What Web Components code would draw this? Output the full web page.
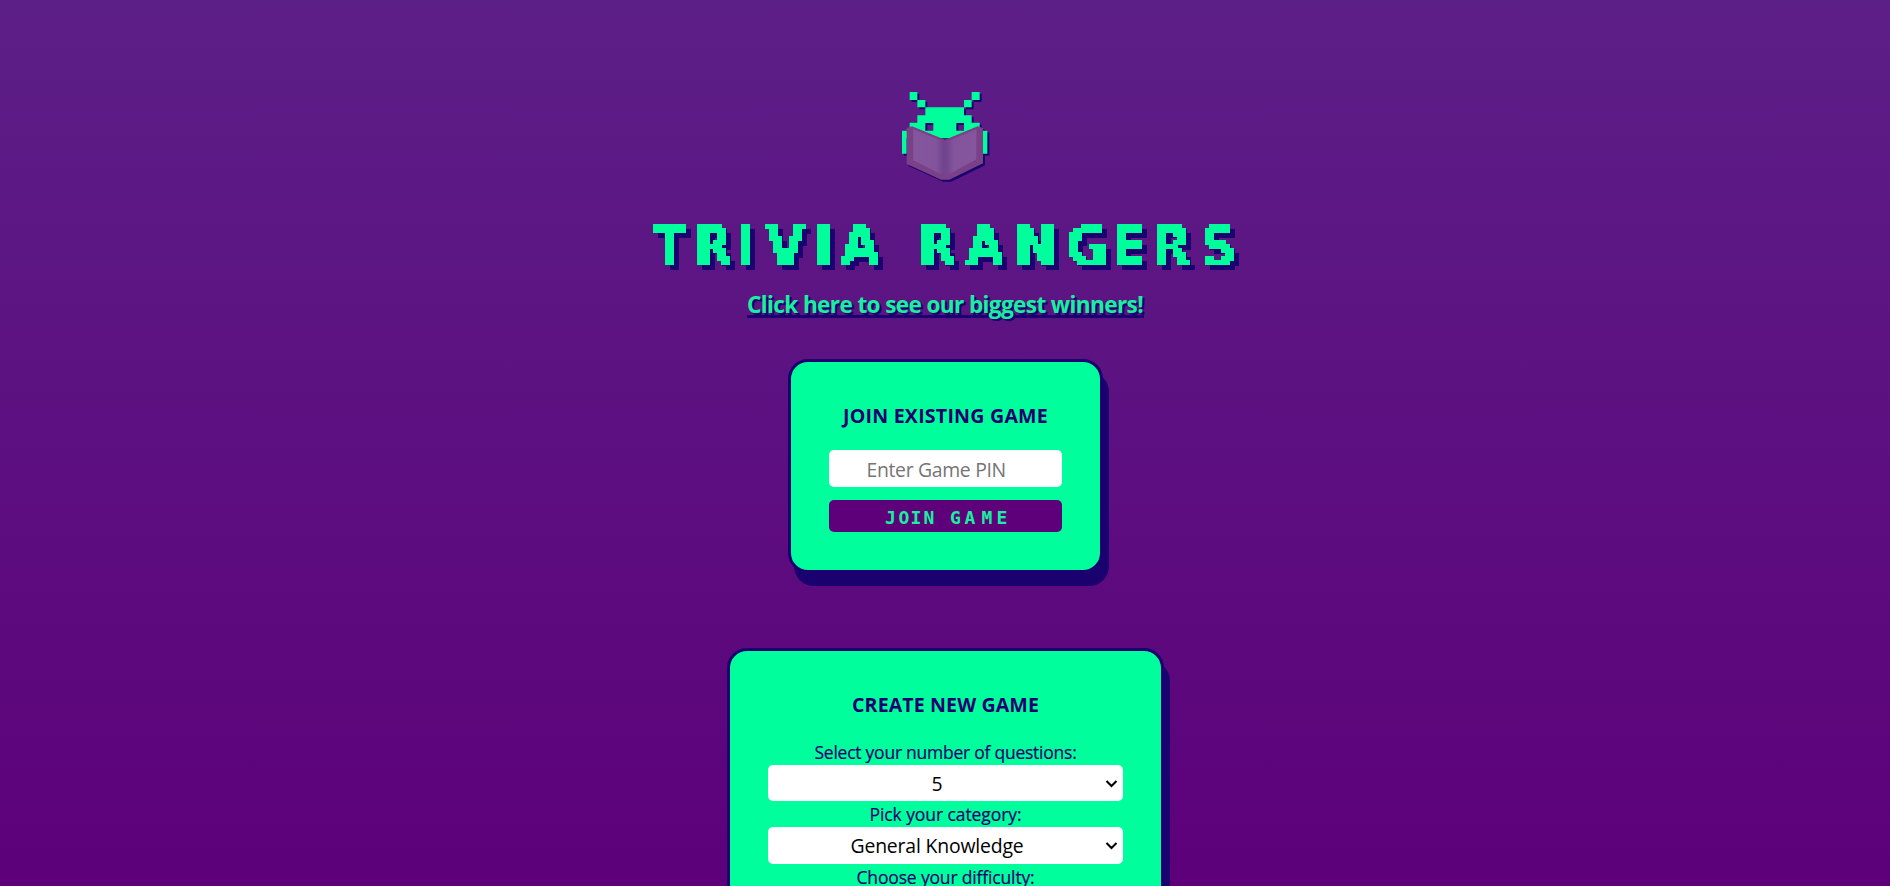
<!DOCTYPE html>
<html lang="en"><head><meta charset="utf-8"><title>Trivia Rangers</title>
<style>
html,body{margin:0;height:100%;overflow:hidden}
body{font-family:"Open Sans","Noto Sans",sans-serif}
</style></head><body>
<trivia-app></trivia-app>
<script>
const define=(name,html,setup)=>customElements.define(name,class extends HTMLElement{
  connectedCallback(){
    if(this.shadowRoot)return;
    const t=document.createElement('template');t.innerHTML=html;
    this.attachShadow({mode:'open'}).append(t.content.cloneNode(true));
    if(setup)setup(this,this.shadowRoot);
  }
});

/* Line of text tracked out (or in) to an even measure. */
define('fit-text','<style>:host{display:inline-block;white-space:nowrap}</style><span><slot></slot></span>',(el,root)=>{
  const s=root.querySelector('span'),w=+el.getAttribute('measure'),n=el.textContent.length;
  const ls=(w-s.getBoundingClientRect().width)/n;
  s.style.letterSpacing=ls.toFixed(3)+'px';
});

define('ranger-logo',`<style>:host{display:block;width:110px;height:110px}svg{display:block;filter:drop-shadow(2px 2px 0 #1b006f)}</style>
<svg width="110" height="110" viewBox="0 0 330 330">
<defs><linearGradient id="spine"><stop offset="0" stop-color="#85569d"/><stop offset=".36" stop-color="#83549b"/><stop offset=".47" stop-color="#73458f"/><stop offset=".53" stop-color="#73458f"/><stop offset=".64" stop-color="#83549b"/><stop offset="1" stop-color="#85569d"/></linearGradient></defs>
<path fill="#00ff9c" fill-rule="evenodd" d="M59 36H82V60H106V82H222V60H245V36H269V60H245V82H222V106H245V128H269V152H279V152H292V221H278V175H50V221H36V152H59V128H82V106H106V82H82V60H59ZM106 129V152H130V129ZM199 129V152H222V129Z"/>
<path fill="#7a4188" d="M50 144L66 139L165 179L263 139L279 144V250L178 299H153L50 252Z"/>
<path fill="url(#spine)" d="M70 148L165 187L259 148V238L180 281L165 288L150 281L70 241Z"/>
</svg>`);

/* Arcade lettering: real text, sampled into square blocks. */
define('arcade-text',`<style>:host{display:block}svg{display:block;overflow:visible}text{font-family:var(--face,"DejaVu Sans Condensed","DejaVu Sans",sans-serif);font-stretch:condensed;font-weight:700;text-anchor:middle;fill:var(--ink,#00ff9c)}</style>
<svg><defs><filter id="blocks" filterUnits="userSpaceOnUse" x="0" y="0"><feFlood result="dot"/><feComposite class="cell" in="dot" in2="dot" operator="over" result="cell"/><feTile in="cell" result="grid"/><feComposite in="SourceGraphic" in2="grid" operator="in"/><feComponentTransfer result="pts"><feFuncA type="discrete" tableValues="0 1"/></feComponentTransfer><feMorphology operator="dilate"/></filter></defs><text></text></svg>`,(el,root)=>{
  const a=k=>el.getAttribute(k),svg=root.querySelector('svg'),t=root.querySelector('text'),f=root.querySelector('filter');
  const w=a('width'),h=a('height'),c=+a('cell');
  svg.setAttribute('width',w);svg.setAttribute('height',h);
  t.textContent=a('text');t.setAttribute('x',a('centers'));t.setAttribute('y',a('baseline'));t.style.fontSize=a('size')+'px';
  if(c){
    f.setAttribute('width',w);f.setAttribute('height',h);
    const set=(e,o)=>{for(const k in o)e.setAttribute(k,o[k])};
    set(root.querySelector('feFlood'),{x:c/2,y:c/2,width:1,height:1});
    set(root.querySelector('.cell'),{x:0,y:0,width:c,height:c});
    root.querySelector('feMorphology').setAttribute('radius',c/2);
    t.setAttribute('filter','url(#blocks)');
  }
  if(a('shadow'))svg.style.filter='drop-shadow('+a('shadow')+' #1b006f)';
});

define('game-card',`<style>:host{display:flex;flex-direction:column;align-items:stretch;box-sizing:border-box;border:3px solid #1b006f;border-radius:20px;background:#00ff9c;box-shadow:6px 13px 0 #1b006f;padding:0 38px;color:#1b006f;text-align:center}
h2{margin:35px 0 0;height:36px;font-size:19.6px;line-height:37px;font-weight:700;padding-left:1px}</style><h2><slot name="title"></slot></h2><slot></slot>`);

define('pin-field',`<style>:host{display:block}input{display:block;box-sizing:border-box;width:100%;height:37px;border:0;border-radius:5px;padding:2px 0 0 38px;background:#fff;font:400 19.4px "Open Sans",sans-serif;letter-spacing:-.32px}input::placeholder{color:#757575;opacity:1}</style><input placeholder="Enter Game PIN">`);

define('game-button',`<style>:host{display:block}button{display:block;width:100%;height:32px;border:0;border-radius:5px;background:#5f007b;padding:0}</style><button><slot></slot></button>`);

define('pick-field',`<style>:host{display:block}.l{display:block;height:25px;line-height:25px;font-size:17.5px;font-weight:500;padding-left:1px;-webkit-text-stroke:.2px #1b006f}
.s{position:relative;box-sizing:border-box;background:#fff;color:#000;height:var(--h,37px);border-radius:5px;font-size:19.4px;line-height:38px;padding-right:16px}
svg{position:absolute;right:5px;top:14px}</style><div class="l"><slot name="label"></slot></div><div class="s"><slot></slot><svg width="13" height="10" viewBox="0 0 13 10"><path d="M1.5 2L6.5 7L11.5 2" fill="none" stroke="#000" stroke-width="2.1"/></svg></div>`);

define('trivia-app',`<style>
:host{display:flex;flex-direction:column;align-items:center;height:886px;overflow:hidden;background:linear-gradient(#5c1f87,#5d007a)}
:host>*{flex:none}
ranger-logo{margin-top:80px}
.title{margin-top:26px}
a{display:block;position:relative;z-index:1;height:40px;line-height:41.5px;margin-top:4px;font-size:22.6px;font-weight:700;color:#17f0a0;text-decoration:none;text-shadow:2px 2px 0 #1b006f}
.u{width:397px;height:3px;margin-top:-9px;background:#1b006f}
.join{width:315px;height:214px;margin-top:41px}
.make{width:437px;height:560px;margin-top:75px}
pin-field{margin-top:17px}game-button{margin-top:13px}
game-button arcade-text{--face:"DejaVu Sans Mono",monospace;--ink:#17f0a0}
.first{margin-top:18px;--h:36px}
.next{margin-top:1px}
</style>
<ranger-logo></ranger-logo>
<arcade-text class="title" width="600" height="64" text="TRIVIA RANGERS" centers="25 68 101 140 179 215 260 293 340 390 442 484 527 574" baseline="49" size="56" cell="4" shadow="5px 5px 0"></arcade-text>
<a href="#"><fit-text measure="396">Click here to see our biggest winners!</fit-text></a>
<div class="u"></div>
<game-card class="join"><fit-text slot="title" measure="205">JOIN EXISTING GAME</fit-text>
<pin-field></pin-field>
<game-button><arcade-text width="233" height="32" text="JOIN GAME" centers="61.5 75 87 100 113 126.5 141 158 173" baseline="24" size="18"></arcade-text></game-button></game-card>
<game-card class="make"><fit-text slot="title" measure="187">CREATE NEW GAME</fit-text>
<pick-field class="first"><fit-text slot="label" measure="262">Select your number of questions:</fit-text>5</pick-field>
<pick-field class="next"><fit-text slot="label" measure="152">Pick your category:</fit-text><fit-text measure="173">General Knowledge</fit-text></pick-field>
<pick-field class="next"><fit-text slot="label" measure="178">Choose your difficulty:</fit-text></pick-field>
</game-card>`);
</script></body></html>
